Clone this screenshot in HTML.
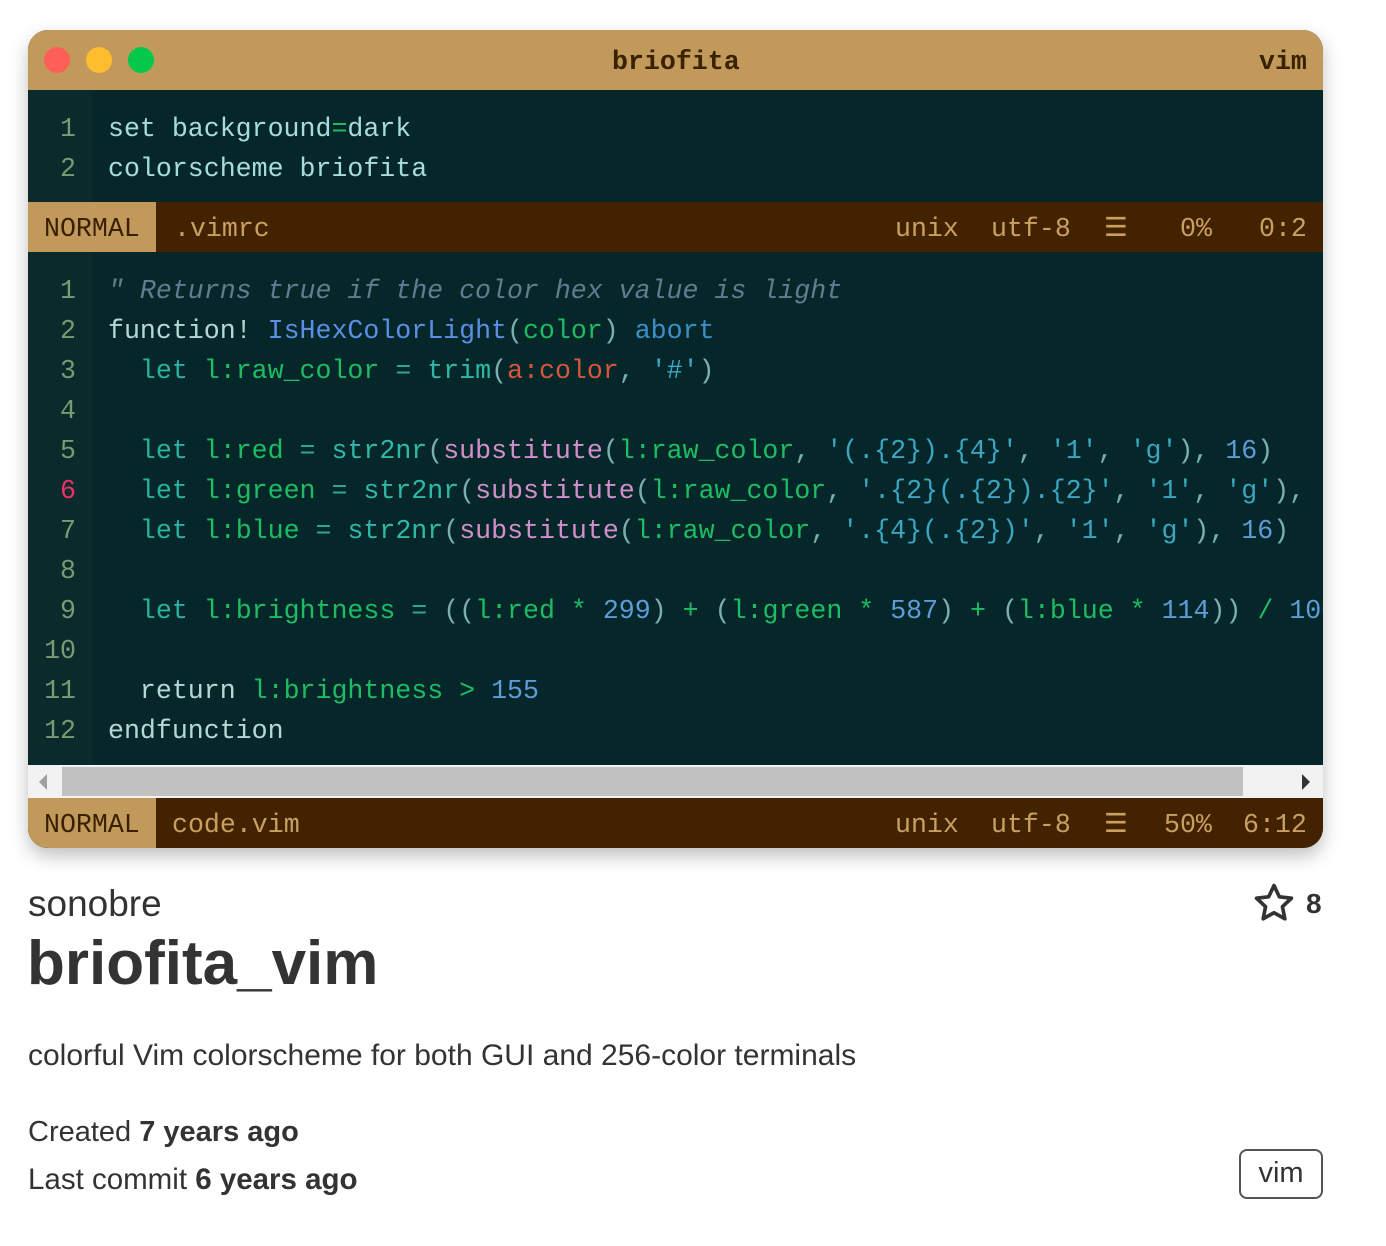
<!DOCTYPE html>
<html><head><meta charset="utf-8"><style>
*{margin:0;padding:0;box-sizing:border-box}
body{width:1386px;height:1246px;background:#fff;position:relative;overflow:hidden;font-family:"Liberation Sans",sans-serif}
.win{position:absolute;left:28px;top:30px;width:1295px;height:818px;border-radius:20px;overflow:hidden;background:#06272a;box-shadow:0 8px 18px rgba(0,0,0,.25)}
.mono{font-family:"Liberation Mono","DejaVu Sans Mono",monospace;font-size:26.6px}
.title{position:absolute;left:0;top:0;width:100%;height:60px;background:#c19a5b}
.dot{position:absolute;top:17px;width:26px;height:26px;border-radius:50%}
.tt{position:absolute;top:2px;line-height:60px;color:#3a2200;font-weight:bold}
.code{position:absolute;left:0;width:100%;overflow:hidden}
.gut{position:absolute;left:0;top:0;width:64px;height:100%;background:#0a2a2c}
.ln{position:absolute;left:0;width:1295px;height:40px;line-height:40px;white-space:pre;margin-top:2px}
.n{position:absolute;left:0;width:48px;text-align:right;color:#7a9a72}
.t{position:absolute;left:80px;color:#a8dcdc}
.st{position:absolute;left:0;width:100%;height:50px;background:#432200;color:#c9a062;line-height:54px;white-space:pre}
.mode{position:absolute;left:0;top:0;width:128px;height:50px;background:#c19a5b;color:#3a2000;padding-left:16px}
.st span{position:absolute;top:0}
.kw{color:#27b3a0}.v{color:#1dbb62}.op{color:#2fa58f}.fn{color:#2db8a8}.sub{color:#d38fcc}.s{color:#3aa6c2}.num{color:#5d9cd8}.p{color:#7ab0ae}.cm{color:#5e7d90;font-style:italic}.id{color:#5b8fe6}.ab{color:#3b8fc8}.ar{color:#d4573c}.lt{color:#b4d8d6}
.sb{position:absolute;left:0;top:735px;width:100%;height:33px;background:#f2f2f2}
</style></head><body>
<div class="win">
 <div class="title mono">
  <div class="dot" style="left:16px;background:#fe5f57"></div>
  <div class="dot" style="left:58px;background:#febc2e"></div>
  <div class="dot" style="left:100px;background:#05c84a"></div>
  <div class="tt" style="left:584px">briofita</div>
  <div class="tt" style="left:1231px">vim</div>
 </div>
 <div class="code mono" style="top:60px;height:112px">
  <div class="gut"></div>
  <div class="ln" style="top:17px"><span class="n">1</span><span class="t">set background<span class="v">=</span>dark</span></div>
  <div class="ln" style="top:57px"><span class="n">2</span><span class="t">colorscheme briofita</span></div>
 </div>
 <div class="st mono" style="top:172px"><div class="mode">NORMAL</div><span style="left:146px">.vimrc</span><span style="left:867px">unix</span><span style="left:963px">utf-8</span><span style="left:1076px">☰</span><span style="left:1152px">0%</span><span style="left:1231px">0:2</span></div>
 <div class="code mono" style="top:222px;height:513px">
  <div class="gut"></div>
  <div class="ln" style="top:17px"><span class="n">1</span><span class="t cm">" Returns true if the color hex value is light</span></div>
  <div class="ln" style="top:57px"><span class="n">2</span><span class="t"><span class="lt">function!</span> <span class="id">IsHexColorLight</span><span class="p">(</span><span class="v">color</span><span class="p">)</span> <span class="ab">abort</span></span></div>
  <div class="ln" style="top:97px"><span class="n">3</span><span class="t">  <span class="kw">let</span> <span class="v">l:raw_color</span> <span class="op">=</span> <span class="fn">trim</span><span class="p">(</span><span class="ar">a:color</span><span class="p">,</span> <span class="s">'#'</span><span class="p">)</span></span></div>
  <div class="ln" style="top:137px"><span class="n">4</span></div>
  <div class="ln" style="top:177px"><span class="n">5</span><span class="t">  <span class="kw">let</span> <span class="v">l:red</span> <span class="op">=</span> <span class="fn">str2nr</span><span class="p">(</span><span class="sub">substitute</span><span class="p">(</span><span class="v">l:raw_color</span><span class="p">,</span> <span class="s">'(.{2}).{4}'</span><span class="p">,</span> <span class="s">'1'</span><span class="p">,</span> <span class="s">'g'</span><span class="p">),</span> <span class="num">16</span><span class="p">)</span></span></div>
  <div class="ln" style="top:217px"><span class="n" style="color:#f0306a">6</span><span class="t">  <span class="kw">let</span> <span class="v">l:green</span> <span class="op">=</span> <span class="fn">str2nr</span><span class="p">(</span><span class="sub">substitute</span><span class="p">(</span><span class="v">l:raw_color</span><span class="p">,</span> <span class="s">'.{2}(.{2}).{2}'</span><span class="p">,</span> <span class="s">'1'</span><span class="p">,</span> <span class="s">'g'</span><span class="p">),</span></span></div>
  <div class="ln" style="top:257px"><span class="n">7</span><span class="t">  <span class="kw">let</span> <span class="v">l:blue</span> <span class="op">=</span> <span class="fn">str2nr</span><span class="p">(</span><span class="sub">substitute</span><span class="p">(</span><span class="v">l:raw_color</span><span class="p">,</span> <span class="s">'.{4}(.{2})'</span><span class="p">,</span> <span class="s">'1'</span><span class="p">,</span> <span class="s">'g'</span><span class="p">),</span> <span class="num">16</span><span class="p">)</span></span></div>
  <div class="ln" style="top:297px"><span class="n">8</span></div>
  <div class="ln" style="top:337px"><span class="n">9</span><span class="t">  <span class="kw">let</span> <span class="v">l:brightness</span> <span class="op">=</span> <span class="p">((</span><span class="v">l:red</span> <span class="v">*</span> <span class="num">299</span><span class="p">)</span> <span class="v">+</span> <span class="p">(</span><span class="v">l:green</span> <span class="v">*</span> <span class="num">587</span><span class="p">)</span> <span class="v">+</span> <span class="p">(</span><span class="v">l:blue</span> <span class="v">*</span> <span class="num">114</span><span class="p">))</span> <span class="v">/</span> <span class="num">1000</span></span></div>
  <div class="ln" style="top:377px"><span class="n">10</span></div>
  <div class="ln" style="top:417px"><span class="n">11</span><span class="t">  <span class="lt">return</span> <span class="v">l:brightness</span> <span class="v">&gt;</span> <span class="num">155</span></span></div>
  <div class="ln" style="top:457px"><span class="n">12</span><span class="t lt">endfunction</span></div>
 </div>
 <div class="sb">
  <div style="position:absolute;left:11px;top:9px;width:0;height:0;border-top:8px solid transparent;border-bottom:8px solid transparent;border-right:8px solid #a0a0a0"></div>
  <div style="position:absolute;left:34px;top:2px;width:1181px;height:29px;background:#c1c1c1"></div>
  <div style="position:absolute;left:1274px;top:9px;width:0;height:0;border-top:8px solid transparent;border-bottom:8px solid transparent;border-left:8px solid #333"></div>
 </div>
 <div class="st mono" style="top:768px"><div class="mode">NORMAL</div><span style="left:144px">code.vim</span><span style="left:867px">unix</span><span style="left:963px">utf-8</span><span style="left:1076px">☰</span><span style="left:1136px">50%</span><span style="left:1215px">6:12</span></div>
</div>
<div style="position:absolute;left:28px;top:883px;font-size:37px;color:#333;line-height:42px">sonobre</div>
<div style="position:absolute;left:27px;top:928px;font-size:62px;font-weight:bold;color:#333;line-height:72px">briofita_vim</div>
<div style="position:absolute;left:28px;top:1037px;font-size:30px;color:#333;line-height:38px">colorful Vim colorscheme for both GUI and 256-color terminals</div>
<div style="position:absolute;left:28px;top:1113px;font-size:29px;color:#333;line-height:38px">Created <b>7 years ago</b></div>
<div style="position:absolute;left:28px;top:1161px;font-size:29.5px;color:#333;line-height:38px">Last commit <b>6 years ago</b></div>
<svg style="position:absolute;left:1252px;top:881px" width="44" height="44" viewBox="0 0 24 24"><path d="M12 2.5l2.9 6.1 6.6.8-4.9 4.6 1.3 6.6L12 17.3l-5.9 3.3 1.3-6.6-4.9-4.6 6.6-.8z" fill="none" stroke="#333" stroke-width="2" stroke-linejoin="round"/></svg>
<div style="position:absolute;left:1306px;top:886px;font-size:28px;font-weight:bold;color:#333;line-height:36px">8</div>
<div style="position:absolute;left:1239px;top:1149px;width:84px;height:50px;border:2px solid #555;border-radius:8px;font-size:29px;color:#333;text-align:center;line-height:44px">vim</div>
</body></html>
